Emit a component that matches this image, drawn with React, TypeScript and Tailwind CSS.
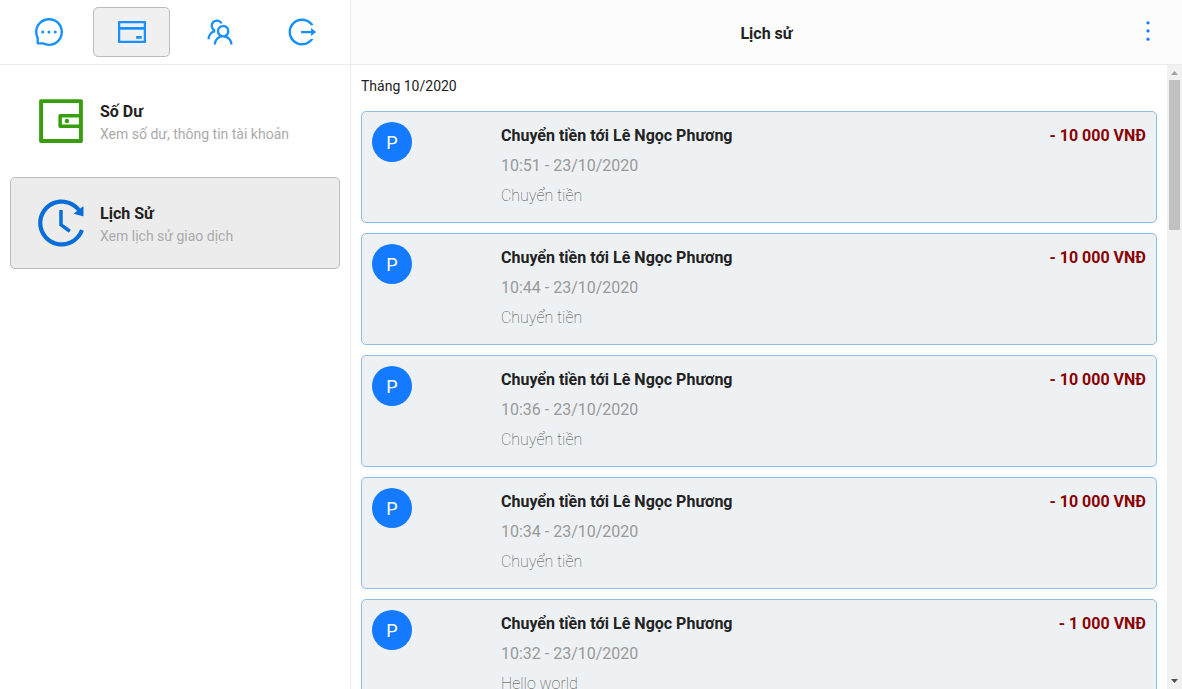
import {
  AiOutlineMessage,
  AiOutlineCreditCard,
  AiOutlineTeam,
  AiOutlineLogout,
  AiOutlineWallet,
  AiOutlineHistory,
  AiOutlineMore,
} from 'react-icons/ai';
import type { ReactNode } from 'react';

type Transaction = { time: string; note: string; amount: string };

const transactions: Transaction[] = [
  { time: '10:51 - 23/10/2020', note: 'Chuyển tiền', amount: '- 10 000 VNĐ' },
  { time: '10:44 - 23/10/2020', note: 'Chuyển tiền', amount: '- 10 000 VNĐ' },
  { time: '10:36 - 23/10/2020', note: 'Chuyển tiền', amount: '- 10 000 VNĐ' },
  { time: '10:34 - 23/10/2020', note: 'Chuyển tiền', amount: '- 10 000 VNĐ' },
  { time: '10:32 - 23/10/2020', note: 'Hello world', amount: '- 1 000 VNĐ' },
];

function NavButton({ label, active = false, children }: { label: string; active?: boolean; children: ReactNode }) {
  return (
    <button
      type="button"
      aria-label={label}
      className={
        active
          ? 'flex h-[50px] w-[77px] items-center justify-center rounded-[5px] border border-[#bbbbbb] bg-[#f0f0f0]'
          : 'flex h-[50px] w-[77px] items-center justify-center'
      }
    >
      {children}
    </button>
  );
}

function MenuItem({ title, detail, active = false, icon }: { title: string; detail: string; active?: boolean; icon: ReactNode }) {
  return (
    <button
      type="button"
      className={
        active
          ? 'flex h-[92px] items-center gap-[11px] rounded-[5px] border border-[#bbbbbb] bg-[#ececec] pl-[22px] text-left'
          : 'flex h-[92px] items-center gap-[11px] rounded-[5px] border border-transparent pl-[22px] text-left'
      }
    >
      {icon}
      <span className="flex flex-col pt-1">
        <span className="text-base leading-[22px] font-bold text-[#222222]">{title}</span>
        <span className="text-sm leading-[22px] text-[#aaaaaa]">{detail}</span>
      </span>
    </button>
  );
}

function TransactionCard({ time, note, amount }: Transaction) {
  return (
    <li className="flex h-28 items-start rounded-[5px] border border-[#8fbde8] bg-[#edf1f4] p-[10px]">
      <div className="w-1/6">
        <span className="flex size-10 items-center justify-center rounded-full bg-[#147aff] pt-px text-lg text-white">P</span>
      </div>
      <div className="flex-1 text-base leading-[30px]">
        <h2 className="-mt-px font-bold text-[#222222]">Chuyển tiền tới Lê Ngọc Phương</h2>
        <p className="text-[#999999]">{time}</p>
        <p className="font-thin text-[#444444]">{note}</p>
      </div>
      <p className="text-base leading-[28px] font-bold text-[#8b0000]">{amount}</p>
    </li>
  );
}

function ScrollBar() {
  return (
    <div aria-hidden="true" className="flex w-[15px] shrink-0 flex-col items-center bg-[#f1f1f1]">
      <svg viewBox="0 0 15 15" className="size-[15px] shrink-0">
        <path d="M4 10h7L7.5 6z" fill="#a3a3a3" />
      </svg>
      <div className="h-[24%] w-[11px] bg-[#c1c1c1]" />
      <svg viewBox="0 0 15 15" className="mt-auto size-[15px] shrink-0">
        <path d="M4 5h7L7.5 9z" fill="#505050" />
      </svg>
    </div>
  );
}

export default function App() {
  return (
    <div className="flex h-screen bg-white font-['Roboto',sans-serif] text-[#222222]">
      <aside className="flex w-[351px] shrink-0 flex-col border-r border-[#ececec]">
        <nav className="flex h-[65px] items-center justify-between border-b border-[#ececec] px-[10px]">
          <div className="flex gap-[6px]">
            <NavButton label="Tin nhắn"><AiOutlineMessage className="size-8 text-[#1890ff]" /></NavButton>
            <NavButton label="Ví" active><AiOutlineCreditCard className="size-8 text-[#1890ff]" /></NavButton>
          </div>
          <div className="flex gap-[5px]">
            <NavButton label="Bạn bè"><AiOutlineTeam className="size-8 text-[#1890ff]" /></NavButton>
            <NavButton label="Đăng xuất"><AiOutlineLogout className="size-8 text-[#1890ff]" /></NavButton>
          </div>
        </nav>
        <div className="flex flex-col gap-[10px] p-[10px]">
          <MenuItem title="Số Dư" detail="Xem số dư, thông tin tài khoản" icon={<AiOutlineWallet className="size-14 text-[#389e0d]" />} />
          <MenuItem active title="Lịch Sử" detail="Xem lịch sử giao dịch" icon={<AiOutlineHistory className="size-14 text-[#096dd9]" />} />
        </div>
      </aside>
      <main className="flex min-w-0 flex-1 flex-col">
        <header className="grid h-[65px] shrink-0 grid-cols-[1fr_auto_1fr] items-center border-b border-[#ececec] bg-[#fcfcfc] px-[19px]">
          <h1 className="col-start-2 pt-1 text-base font-bold">Lịch sử</h1>
          <button type="button" aria-label="Thêm" className="mb-[3px] justify-self-end">
            <AiOutlineMore className="size-[30px] text-[#147aff]" />
          </button>
        </header>
        <div className="flex min-h-0 flex-1">
          <section className="min-w-0 flex-1 overflow-y-auto p-[10px]">
            <p className="text-sm leading-[22px]">Tháng 10/2020</p>
            <ul className="mt-[14px] flex flex-col gap-[10px]">
              {transactions.map((item) => (
                <TransactionCard key={item.time} {...item} />
              ))}
            </ul>
          </section>
          <ScrollBar />
        </div>
      </main>
    </div>
  );
}
